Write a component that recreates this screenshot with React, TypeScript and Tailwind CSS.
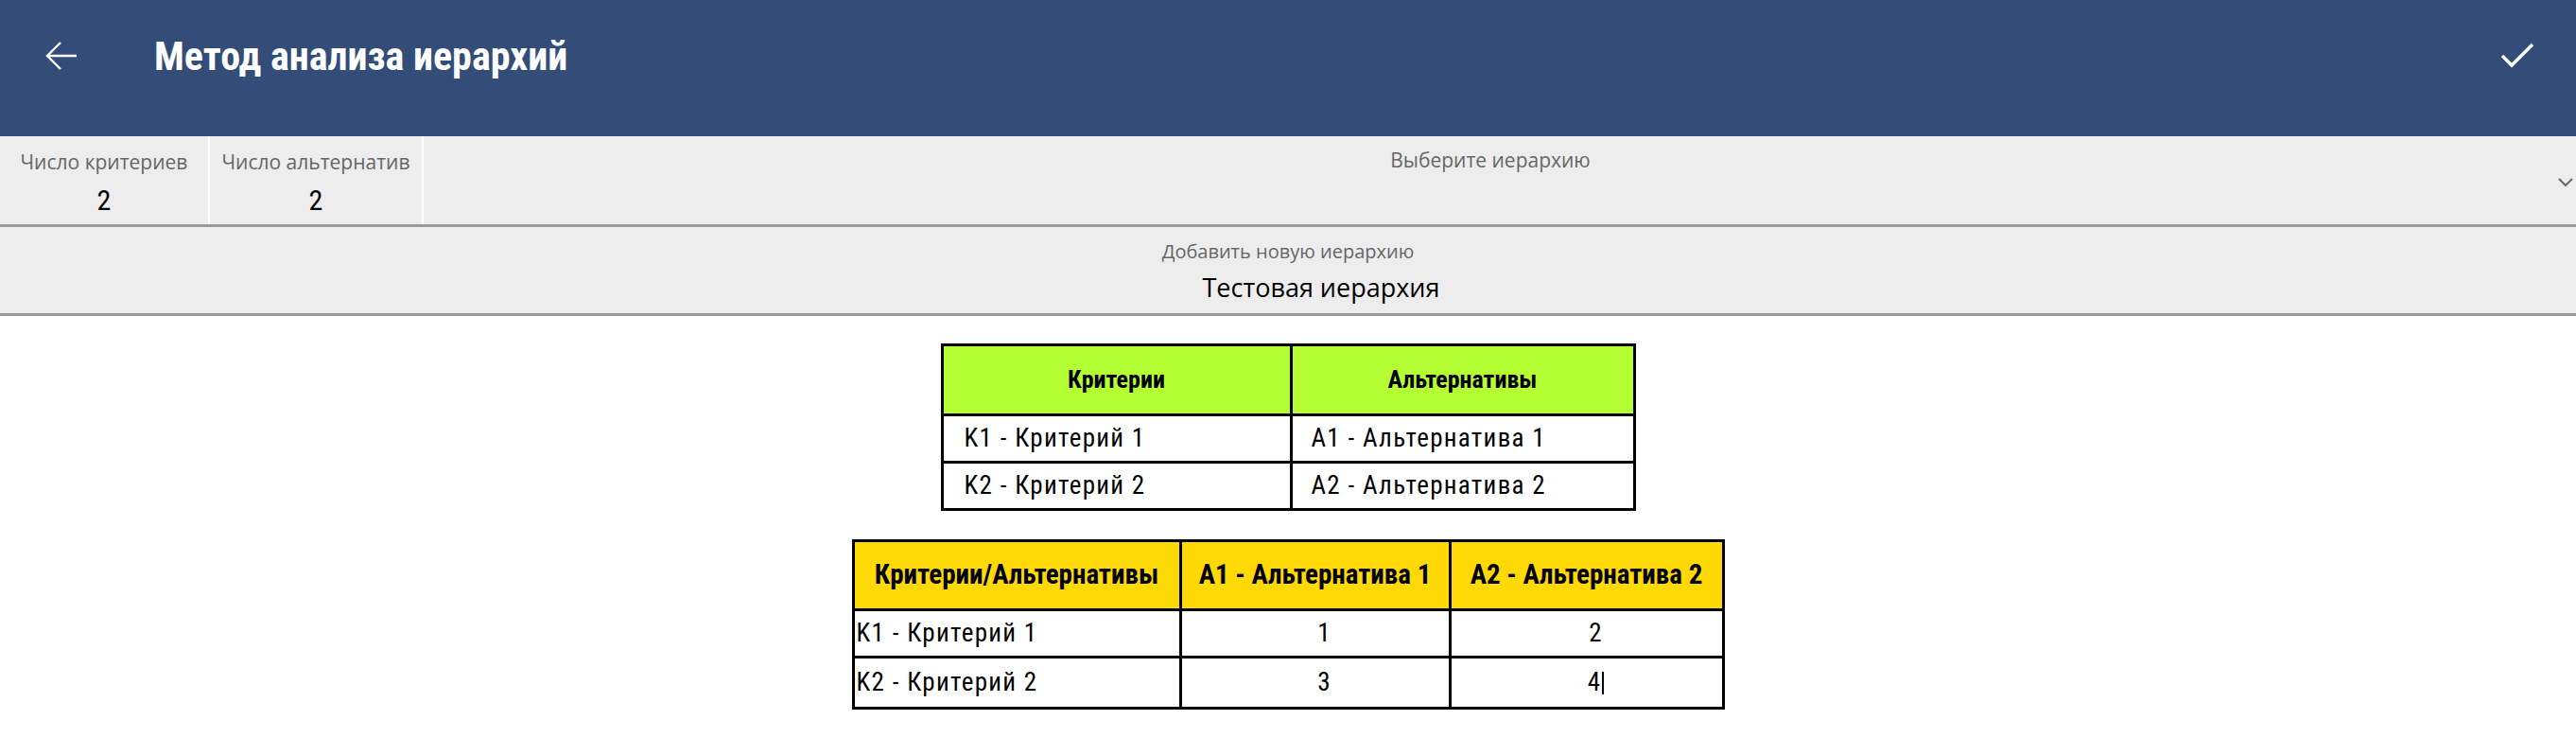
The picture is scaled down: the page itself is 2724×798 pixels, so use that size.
import React from "react";

const din = "font-['Roboto',sans-serif] font-stretch-[75%]";
const ui = "font-['Open_Sans','Noto_Sans',sans-serif]";

const alternatives = ["A1 - Альтернатива 1", "A2 - Альтернатива 2"];

const criteria = [
  { name: "K1 - Критерий 1", values: ["1", "2"] },
  { name: "K2 - Критерий 2", values: ["3", "4"] },
];

export default function App() {
  return (
    <div className="min-h-screen w-[2724px] bg-white">
      {/* Header */}
      <header className="h-[144px] bg-[#334c78] text-white">
        <div className="flex h-[118px] items-center pl-[48px] pr-[44px]">
          <svg width="34" height="30" viewBox="0 0 34 30" fill="none" stroke="white" strokeWidth="2.4">
            <path d="M33 15H3M16 1L2 15l14 14" />
          </svg>
          <h1 className={`${din} ml-[81px] text-[42px] font-bold`}>Метод анализа иерархий</h1>
          <svg className="ml-auto" width="36" height="28" viewBox="0 0 36 28" fill="none" stroke="white" strokeWidth="3.4">
            <path d="M2 14l10 10L34 2" />
          </svg>
        </div>
      </header>

      {/* Counters + hierarchy select */}
      <div className="flex h-[96px] border-b-[3px] border-[#9a9a9a] bg-[#ededed]">
        <div className="flex w-[222px] flex-col items-center border-r-2 border-white pt-[12px]">
          <span className={`${ui} text-[21px] leading-[30px] text-[#666]`}>Число критериев</span>
          <span className={`${din} mt-[10px] text-[30px] leading-[32px] text-black`}>2</span>
        </div>
        <div className="flex w-[226px] flex-col items-center border-r-2 border-white pt-[12px]">
          <span className={`${ui} text-[21px] leading-[30px] text-[#666]`}>Число альтернатив</span>
          <span className={`${din} mt-[10px] text-[30px] leading-[32px] text-black`}>2</span>
        </div>
        <div className="relative flex flex-1 justify-center pt-[10px] pl-[10px] pr-[30px]">
          <span className={`${ui} text-[21px] leading-[30px] text-[#666]`}>Выберите иерархию</span>
          <svg className="absolute right-[3px] top-[44px]" width="16" height="10" viewBox="0 0 16 10" fill="none" stroke="#666" strokeWidth="2">
            <path d="M1 1l7 7 7-7" />
          </svg>
        </div>
      </div>

      {/* New hierarchy */}
      <div className="flex h-[94px] flex-col items-center border-b-[3px] border-[#9a9a9a] bg-[#ededed] pt-[12px]">
        <span className={`${ui} text-[20px] leading-[28px] text-[#666]`}>Добавить новую иерархию</span>
        <span className={`${ui} ml-[70px] mt-[6px] text-[27px] leading-[36px] text-black`}>Тестовая иерархия</span>
      </div>

      {/* Tables */}
      <div className={`${din} flex flex-col items-center pt-[29px] text-black`}>
        <table className="w-[735px] table-fixed border-collapse border-[3px] border-black">
          <thead>
            <tr className="h-[74px] bg-[#b3ff33]">
              <th className="w-[369px] border-[3px] border-black text-[26px] font-bold">Критерии</th>
              <th className="border-[3px] border-black text-[26px] font-bold">Альтернативы</th>
            </tr>
          </thead>
          <tbody className="text-[27px] tracking-[1.3px]">
            {criteria.map((c, i) => (
              <tr key={c.name} className="h-[50px]">
                <td className="border-[3px] border-black pl-[22px]">{c.name}</td>
                <td className="border-[3px] border-black pl-[20px]">{alternatives[i]}</td>
              </tr>
            ))}
          </tbody>
        </table>

        <table className="mt-[30px] w-[923px] table-fixed border-collapse border-[3px] border-black">
          <thead>
            <tr className="h-[73px] bg-[#ffd906]">
              <th className="w-[346px] border-[3px] border-black text-[29px] font-bold">Критерии/Альтернативы</th>
              <th className="w-[285px] border-[3px] border-black text-[29px] font-bold">{alternatives[0]}</th>
              <th className="border-[3px] border-black text-[29px] font-bold">{alternatives[1]}</th>
            </tr>
          </thead>
          <tbody className="text-[27px] tracking-[1.3px]">
            {criteria.map((c, i) => (
              <tr key={c.name} className={i === 0 ? "h-[50px]" : "h-[54px]"}>
                <td className="border-[3px] border-black pl-[2px]">{c.name}</td>
                {c.values.map((v, j) => (
                  <td key={j} className="border-[3px] border-black pl-[20px] text-center">
                    {v}
                    {i === 1 && j === 1 && <span className="ml-[1px] inline-block h-[24px] w-[2px] translate-y-[4px] bg-black" />}
                  </td>
                ))}
              </tr>
            ))}
          </tbody>
        </table>
      </div>
    </div>
  );
}
